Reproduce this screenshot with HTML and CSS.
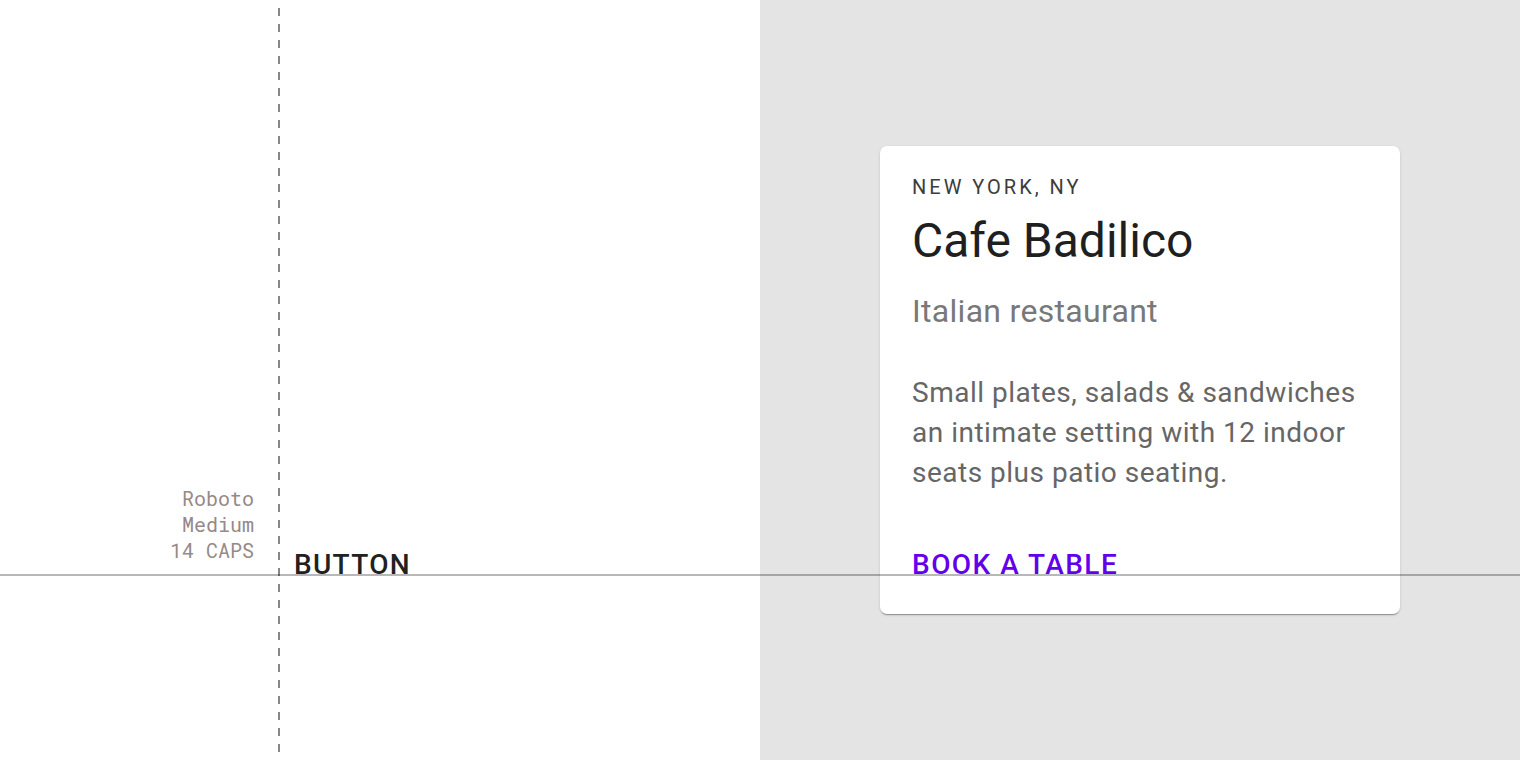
FILE: index.html
```html
<!DOCTYPE html>
<html lang="en">
<head>
    <meta charset="UTF-8">
    <meta name="viewport" content="width=device-width, initial-scale=1.0">
    <title>Type scale - Button</title>
    <link rel="stylesheet" href="styles.css">
</head>
<body>
    <div class="page">
        <div class="spec-panel">
            <div class="spec-label">
                <div>Roboto</div>
                <div>Medium</div>
                <div>14 CAPS</div>
            </div>
            <div class="spec-rule"></div>
            <div class="spec-sample">BUTTON</div>
        </div>
        <div class="preview-panel">
            <div class="card">
                <div class="card-overline">New York, NY</div>
                <div class="card-title">Cafe Badilico</div>
                <div class="card-subtitle">Italian restaurant</div>
                <p class="card-body">Small plates, salads &amp; sandwiches an intimate setting with 12 indoor seats plus patio seating.</p>
                <button class="card-action">Book a table</button>
            </div>
        </div>
        <div class="baseline"></div>
    </div>
</body>
</html>
```

FILE: styles.css
```css
body {
    margin: 0;
    padding: 0;
    font-family: Roboto, "Noto Sans", sans-serif;
    background-color: #fff;
}
.page {
    position: relative;
    display: flex;
    height: 760px;
    overflow: hidden;
}
.spec-panel {
    display: flex;
    width: 760px;
    background-color: #fff;
}
.spec-label {
    width: 254px;
    padding-top: 485px;
    box-sizing: border-box;
    text-align: right;
    font-family: "Roboto Mono", "Liberation Mono", monospace;
    font-size: 20px;
    line-height: 26px;
    color: #958989;
}
.spec-rule {
    width: 2px;
    margin-left: 24px;
    background: repeating-linear-gradient(to bottom, transparent 0 8px, #888 8px 16px);
}
.spec-sample {
    padding-top: 545px;
    padding-left: 14px;
    font-size: 28px;
    font-weight: 500;
    line-height: 40px;
    letter-spacing: 1.3px;
    color: #212121;
}
.preview-panel {
    flex: 1;
    display: flex;
    justify-content: center;
    align-items: center;
    background-color: #e4e4e4;
}
.card {
    width: 520px;
    box-sizing: border-box;
    padding: 25px 32px 29px;
    background-color: #fff;
    border-radius: 7px;
    box-shadow: 0 2px 1px -1px rgba(0, 0, 0, .2), 0 1px 1px 0 rgba(0, 0, 0, .14), 0 1px 3px 0 rgba(0, 0, 0, .12);
}
.card-overline {
    font-size: 20px;
    line-height: 32px;
    letter-spacing: 3px;
    text-transform: uppercase;
    color: #3c3c3c;
}
.card-title {
    margin-top: 6px;
    font-size: 48px;
    line-height: 64px;
    color: #1f1f1f;
}
.card-subtitle {
    margin-top: 18px;
    font-size: 32px;
    line-height: 40px;
    letter-spacing: 0.3px;
    color: #787878;
}
.card-body {
    margin: 42px 0 0;
    font-size: 28px;
    line-height: 40px;
    letter-spacing: 0.5px;
    color: #666;
}
.card-action {
    display: block;
    margin-top: 52px;
    padding: 0;
    border: none;
    background: none;
    font-family: Roboto, "Noto Sans", sans-serif;
    font-size: 28px;
    font-weight: 500;
    line-height: 40px;
    letter-spacing: 1.45px;
    text-transform: uppercase;
    color: #6200ee;
    cursor: pointer;
}
.baseline {
    position: absolute;
    left: 0;
    right: 0;
    top: 574px;
    height: 2px;
    background-color: rgba(0, 0, 0, .28);
}
```
